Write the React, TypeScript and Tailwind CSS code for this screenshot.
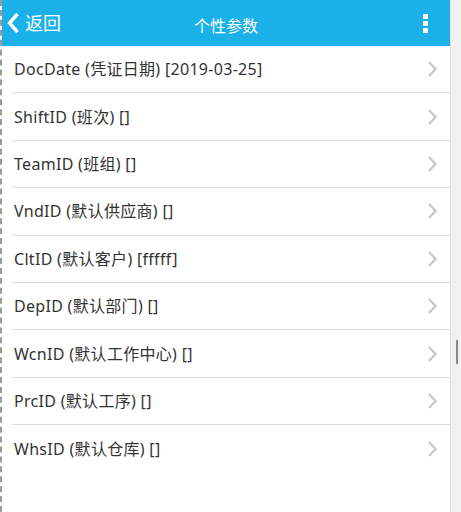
import React from 'react';

const rows = [
  'DocDate (凭证日期) [2019-03-25]',
  'ShiftID (班次) []',
  'TeamID (班组) []',
  'VndID (默认供应商) []',
  'CltID (默认客户) [fffff]',
  'DepID (默认部门) []',
  'WcnID (默认工作中心) []',
  'PrcID (默认工序) []',
  'WhsID (默认仓库) []',
];

const font = { fontFamily: '"Noto Sans", "Noto Sans CJK SC", sans-serif' };

const Chevron: React.FC = () => (
  <svg width="12" height="18" viewBox="0 0 12 18" className="shrink-0">
    <path d="M3 2 L9.5 9 L3 16" fill="none" stroke="#c9c9c9" strokeWidth="2.4" />
  </svg>
);

export default function App() {
  return (
    <div className="w-[461px] h-[512px] flex bg-white border-l-2 border-dashed border-[#9a9a9a] overflow-hidden" style={font}>
      <div className="w-[448px] flex flex-col">
        <div className="h-[46px] bg-[#1ab1e8] flex items-center text-white relative">
          <div className="flex items-center pl-[4px]">
            <svg width="14" height="22" viewBox="0 0 14 22">
              <path d="M11.5 2 L3.5 11 L11.5 20" fill="none" stroke="#fff" strokeWidth="3.4" />
            </svg>
            <span className="text-[18px] ml-[5px] leading-none">返回</span>
          </div>
          <div className="absolute left-0 right-0 text-center text-[16px] pointer-events-none pt-[6px]">个性参数</div>
          <div className="ml-auto mr-[22px] flex flex-col gap-[2px]">
            <span className="w-[5px] h-[5px] bg-white rounded-[1px]" />
            <span className="w-[5px] h-[5px] bg-white rounded-[1px]" />
            <span className="w-[5px] h-[5px] bg-white rounded-[1px]" />
          </div>
        </div>
        <div className="flex flex-col">
          {rows.map((r) => (
            <div key={r} className="h-[47.4px] ml-[10px] flex items-center border-b border-[#dcdcdc] last:border-b-0 pr-[12px]">
              <span className="pl-[2px] text-[16px] text-[#333] tracking-[0.3px]">{r}</span>
              <span className="ml-auto"><Chevron /></span>
            </div>
          ))}
        </div>
      </div>
      <div className="flex-1 bg-[#f1f1f1] border-l border-[#e2e2e2] relative">
        <div className="absolute left-[5px] top-[340px] w-[2px] h-[24px] bg-[#8a8a8a]" />
      </div>
    </div>
  );
}
